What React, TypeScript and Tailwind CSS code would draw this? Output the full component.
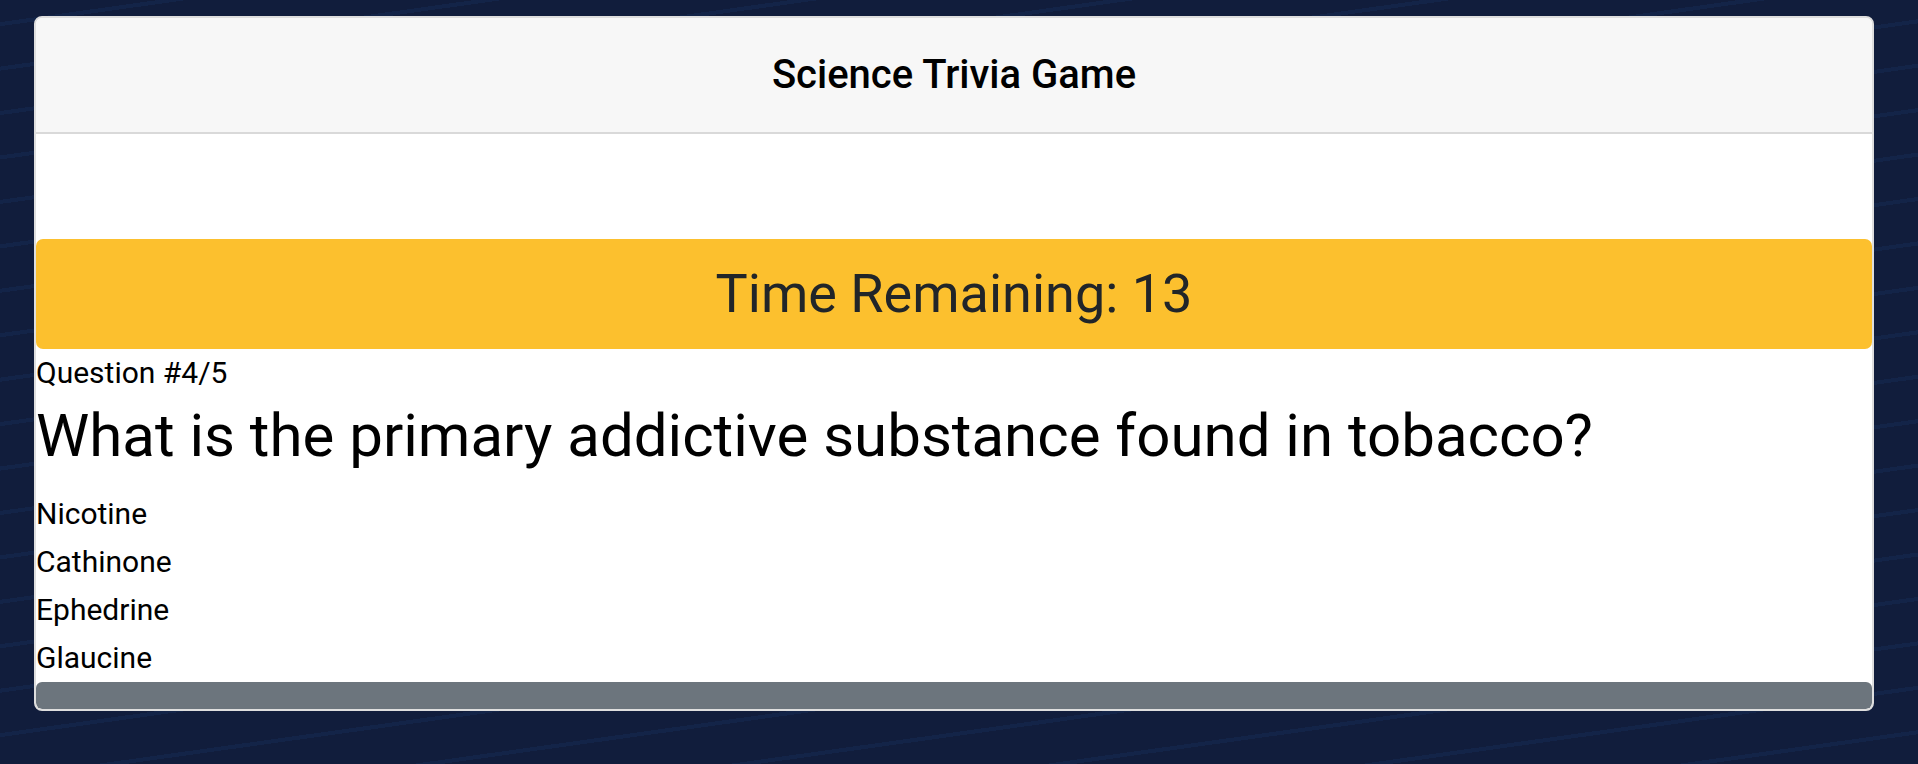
import React from 'react';

const options = ['Nicotine', 'Cathinone', 'Ephedrine', 'Glaucine'];

const App: React.FC = () => {
  return (
    <div className="min-h-[764px] w-full bg-[#111d3c] bg-[repeating-linear-gradient(172deg,transparent_0px,transparent_22px,rgba(24,52,100,0.3)_22px,rgba(24,52,100,0.3)_26px,transparent_26px,transparent_44px)] pt-[16px] pl-[34px] font-['Roboto',sans-serif]">
      <div className="w-[1840px] rounded-[8px] border-2 border-[#dedede] bg-white overflow-hidden">
        {/* header */}
        <div className="h-[116px] flex items-center justify-center bg-[#f7f7f7] border-b-2 border-[#d9d9d9]">
          <h4 className="text-[40px] font-medium leading-none text-black">
            Science Trivia Game
          </h4>
        </div>

        <div className="h-[105px]" />

        {/* timer */}
        <div className="h-[110px] rounded-[7px] bg-[#fcc02e] flex items-center justify-center">
          <h2 className="text-[54px] leading-[1.2] text-[#212529]">
            Time Remaining: 13
          </h2>
        </div>

        <div className="text-[30px] leading-[48px] text-black">Question #4/5</div>
        <h2 className="text-[60px] leading-[77px] mb-[16px] text-black">
          What is the primary addictive substance found in tobacco?
        </h2>

        <div>
          {options.map((o) => (
            <div key={o} className="text-[30px] leading-[48px] text-black">
              {o}
            </div>
          ))}
        </div>

        <div className="h-[27px] rounded-[6px] bg-[#6c757d]" />
      </div>
    </div>
  );
};

export default App;
